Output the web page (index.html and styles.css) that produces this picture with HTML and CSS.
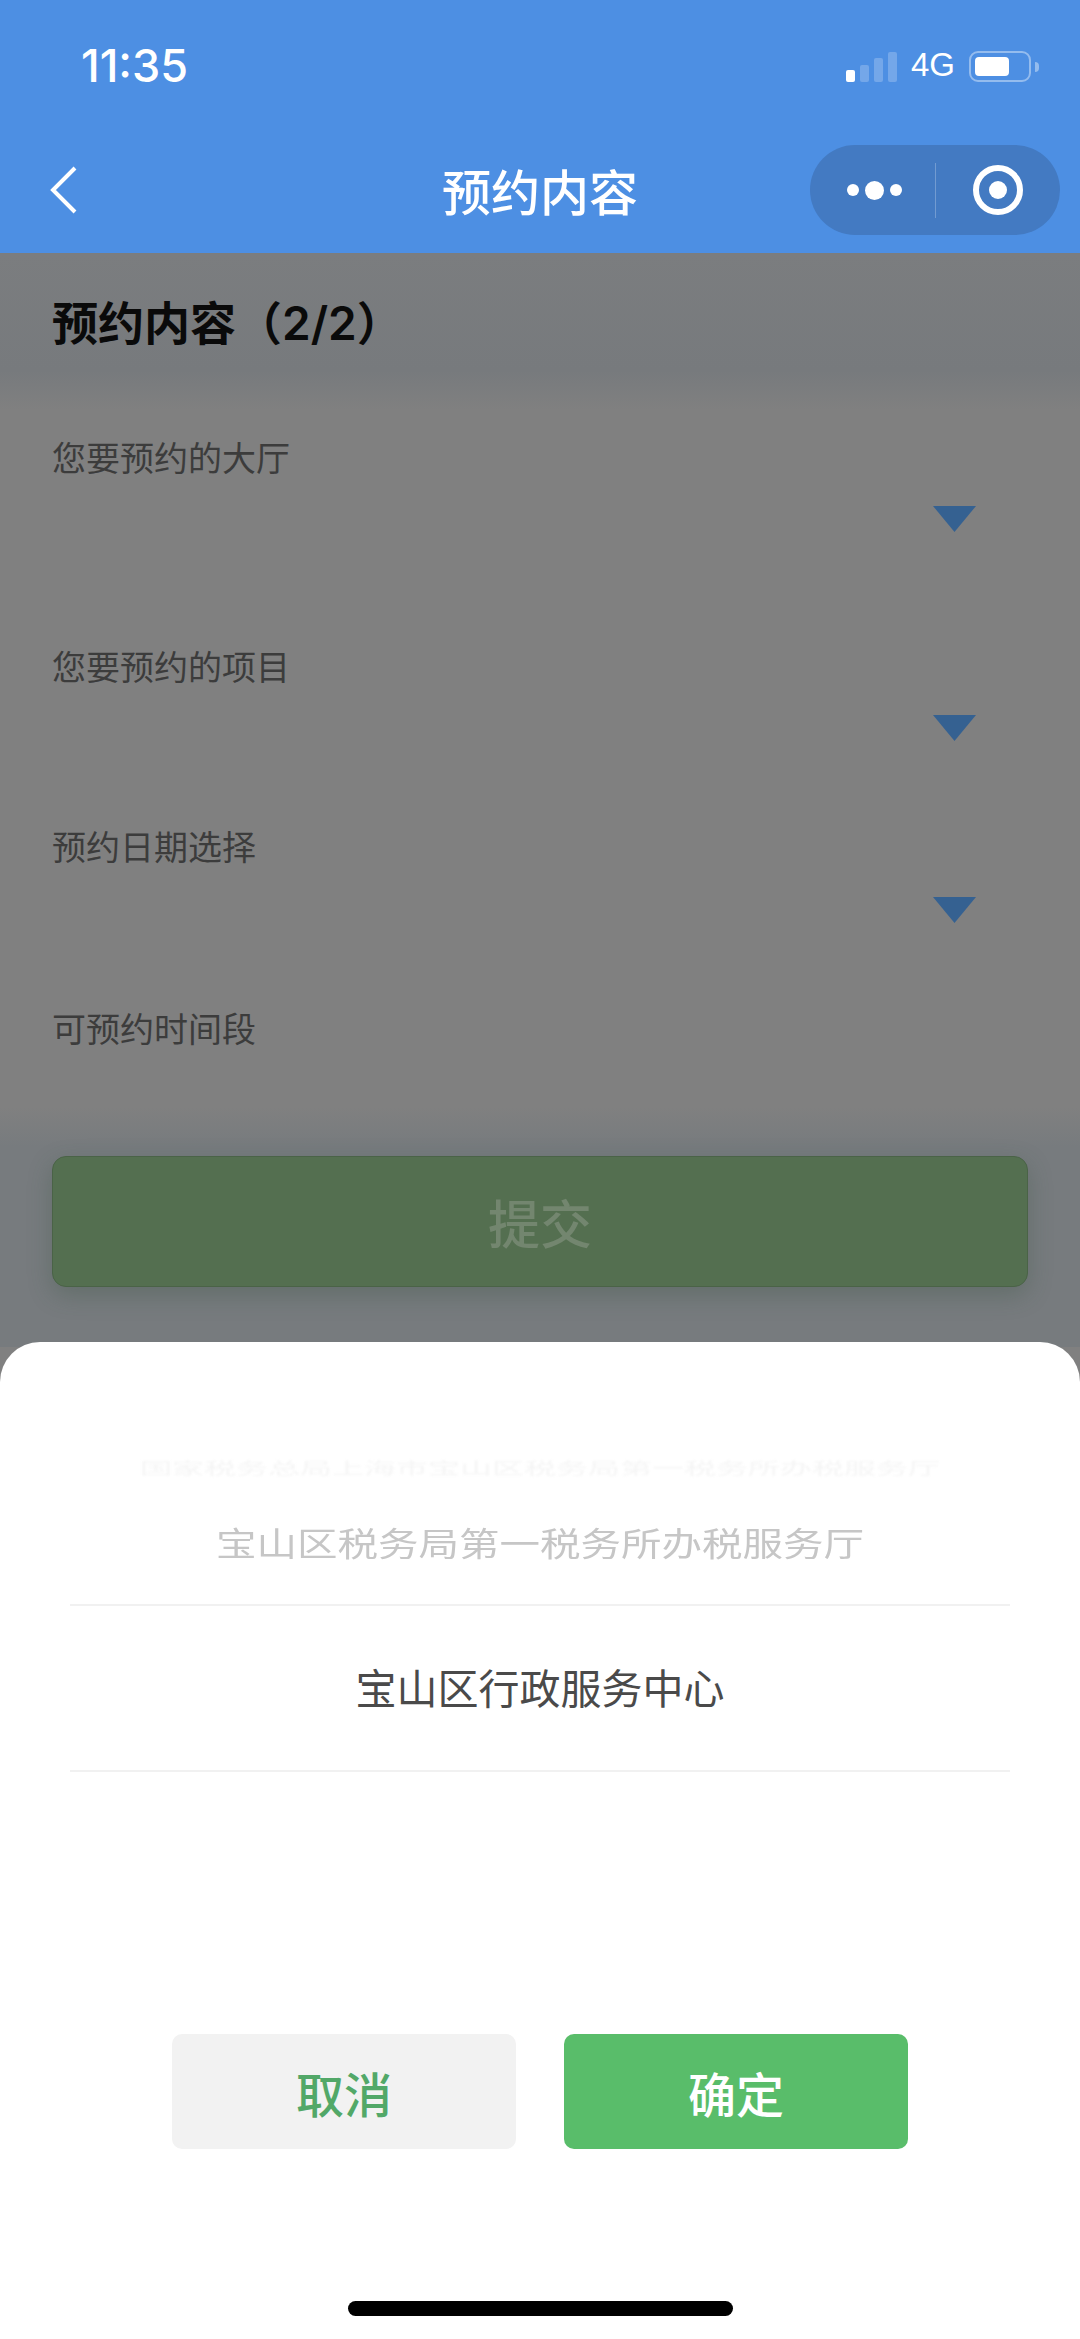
FILE: index.html
```html
<!DOCTYPE html>
<html lang="zh-CN">
<head>
  <meta charset="UTF-8" />
  <meta name="viewport" content="width=device-width, initial-scale=1.0"/>
  <title>预约内容</title>
  <link rel="stylesheet" href="styles.css">
</head>
<body>

<div class="screen">
  <header class="topbar">
    <div class="statusbar">
      <span class="time">11:35</span>
      <div class="status-icons">
        <div class="signal">
          <i class="bar bar1"></i>
          <i class="bar bar2"></i>
          <i class="bar bar3"></i>
          <i class="bar bar4"></i>
        </div>
        <span class="network">4G</span>
        <div class="battery"><i class="battery-level"></i></div>
        <i class="battery-nub"></i>
      </div>
    </div>
    <div class="navbar">
      <svg class="back" width="28" height="48" viewBox="0 0 28 48">
        <path d="M25 2 L3 24 L25 46" fill="none" stroke="#fff" stroke-width="4"/>
      </svg>
      <h1 class="nav-title">预约内容</h1>
      <div class="capsule">
        <div class="capsule-more">
          <i class="dot"></i>
          <i class="dot dot-big"></i>
          <i class="dot"></i>
        </div>
        <i class="capsule-line"></i>
        <div class="capsule-close"><i class="capsule-close-inner"></i></div>
      </div>
    </div>
  </header>

  <main class="content">
    <h2 class="form-title">预约内容（2/2）</h2>
    <div class="field field-hall">
      <label class="field-label">您要预约的大厅</label>
      <i class="arrow"></i>
    </div>
    <div class="field field-item">
      <label class="field-label">您要预约的项目</label>
      <i class="arrow"></i>
    </div>
    <div class="field field-date">
      <label class="field-label">预约日期选择</label>
      <i class="arrow"></i>
    </div>
    <div class="field field-time">
      <label class="field-label">可预约时间段</label>
    </div>
    <div class="submit-wrap">
      <button class="submit" type="button">提交</button>
    </div>
  </main>

  <section class="sheet">
    <div class="picker">
      <div class="picker-ghost"><span>国家税务总局上海市宝山区税务局第一税务所办税服务厅</span></div>
      <div class="picker-option"><span>宝山区税务局第一税务所办税服务厅</span></div>
      <div class="picker-selected">宝山区行政服务中心</div>
    </div>
    <div class="sheet-actions">
      <button class="btn btn-cancel" type="button">取消</button>
      <button class="btn btn-ok" type="button">确定</button>
    </div>
    <div class="home-bar"></div>
  </section>
</div>

</body>
</html>
```

FILE: styles.css
```css
* {
  box-sizing: border-box;
}

body {
  margin: 0;
  font-family: "Noto Sans CJK SC", "Liberation Sans", sans-serif;
}

.screen {
  position: relative;
  width: 1080px;
  height: 2339px;
  overflow: hidden;
  background: #808080;
}

/* top blue area */
.topbar {
  height: 253px;
  background: #4d8fe3;
  color: #fff;
}

.statusbar {
  height: 133px;
  padding: 41px 41px 0 81px;
  display: flex;
  justify-content: space-between;
  align-items: flex-start;
}

.time {
  font-family: Inter, "Liberation Sans", sans-serif;
  font-size: 45px;
  font-weight: 500;
  line-height: 50px;
}

.status-icons {
  display: flex;
  align-items: flex-end;
  height: 41px;
}

.signal {
  display: flex;
  align-items: flex-end;
  gap: 5px;
  height: 30px;
  margin-right: 14px;
}

.bar {
  display: block;
  width: 9px;
  border-radius: 2px;
  background: rgba(255, 255, 255, 0.22);
}

.bar1 {
  height: 12px;
  background: #fff;
}

.bar2 {
  height: 17px;
}

.bar3 {
  height: 24px;
}

.bar4 {
  height: 30px;
}

.network {
  font-family: "Liberation Sans", sans-serif;
  font-size: 33px;
  line-height: 34px;
  margin-right: 14px;
}

.battery {
  width: 62px;
  height: 31px;
  padding: 4px;
  border: 2px solid rgba(255, 255, 255, 0.4);
  border-radius: 9px;
}

.battery-level {
  display: block;
  width: 34px;
  height: 19px;
  background: #fff;
  border-radius: 4px;
}

.battery-nub {
  display: block;
  width: 4px;
  height: 10px;
  margin: 0 0 10px 4px;
  background: rgba(255, 255, 255, 0.4);
  border-radius: 0 4px 4px 0;
}

.navbar {
  height: 120px;
  padding: 12px 20px 18px 50px;
  display: flex;
  align-items: center;
  justify-content: space-between;
  position: relative;
}

.back {
  display: block;
}

.nav-title {
  position: absolute;
  left: 0;
  right: 0;
  margin: 0;
  text-align: center;
  font-size: 49px;
  font-weight: 500;
  line-height: 60px;
}

.capsule {
  width: 250px;
  height: 90px;
  border-radius: 45px;
  background: #437ac2;
  display: flex;
  align-items: center;
}

.capsule-more {
  width: 125px;
  padding-left: 3px;
  display: flex;
  justify-content: center;
  align-items: center;
  gap: 6px;
}

.dot {
  display: block;
  width: 12px;
  height: 12px;
  border-radius: 50%;
  background: #fff;
}

.dot-big {
  width: 19px;
  height: 19px;
}

.capsule-line {
  display: block;
  width: 1px;
  height: 55px;
  background: rgba(255, 255, 255, 0.25);
}

.capsule-close {
  width: 50px;
  height: 50px;
  margin-left: 37px;
  border: 6px solid #fff;
  border-radius: 50%;
  display: flex;
  align-items: center;
  justify-content: center;
}

.capsule-close-inner {
  display: block;
  width: 18px;
  height: 18px;
  border-radius: 50%;
  background: #fff;
}

/* dimmed form behind the sheet */
.form-title {
  margin: 0;
  height: 157px;
  padding: 38px 52px 0;
  background: linear-gradient(#7b7d7f, #777a7d 75%, #808080);
  color: #0a0a0a;
  font-family: Inter, "Noto Sans CJK SC", sans-serif;
  font-size: 46px;
  font-weight: 600;
  line-height: 64px;
}

.field {
  position: relative;
  padding-left: 52px;
}

.field-hall {
  height: 189px;
  padding-top: 22px;
}

.field-item {
  height: 182px;
  padding-top: 42px;
}

.field-date {
  height: 183px;
  padding-top: 40px;
}

.field-time {
  height: 143px;
  padding-top: 39px;
}

.field-hall .arrow {
  top: 96px;
}

.field-label {
  display: block;
  color: #3c3c3c;
  font-size: 34px;
  font-weight: 400;
  line-height: 50px;
}

.arrow {
  position: absolute;
  left: 933px;
  top: 116px;
  width: 43px;
  height: 26px;
  background: #356191;
  clip-path: polygon(0 0, 100% 0, 50% 100%);
}

.submit-wrap {
  height: 240px;
  padding: 49px 52px 0;
  background: linear-gradient(#808080, #777b7e 40px);
}

.submit {
  display: block;
  width: 976px;
  height: 131px;
  border: 1px solid #4a6347;
  border-radius: 14px;
  background: #546f50;
  box-shadow: 0 8px 24px rgba(50, 80, 60, 0.3);
  color: #73866f;
  font-family: inherit;
  font-size: 52px;
  font-weight: 500;
}

/* bottom sheet */
.sheet {
  position: absolute;
  left: 0;
  right: 0;
  top: 1342px;
  bottom: 0;
  background: #fff;
  border-radius: 40px 40px 0 0;
}

.picker {
  height: 431px;
  padding: 111px 70px 0;
}

.picker-ghost {
  height: 28px;
  overflow: hidden;
  text-align: center;
  color: #f5f5f5;
  font-size: 32px;
  line-height: 28px;
  white-space: nowrap;
  filter: blur(1px);
}

.picker-ghost span {
  display: block;
  transform: scaleY(0.5);
}

.picker-option {
  height: 125px;
  padding-top: 36px;
  border-bottom: 2px solid #f1f1f1;
  text-align: center;
  color: #c6c6c6;
  font-size: 40.5px;
  font-weight: 400;
  line-height: 50px;
  white-space: nowrap;
}

.picker-option span {
  display: block;
  transform: scaleY(0.8);
}

.picker-selected {
  height: 166px;
  padding-top: 50px;
  border-bottom: 2px solid #f1f1f1;
  text-align: center;
  color: #4a4a4a;
  font-size: 41px;
  font-weight: 400;
  line-height: 60px;
}

.sheet-actions {
  display: flex;
  justify-content: center;
  gap: 48px;
  padding-top: 261px;
}

.btn {
  width: 344px;
  height: 115px;
  border: none;
  border-radius: 10px;
  font-family: inherit;
  font-size: 48px;
  font-weight: 500;
}

.btn-cancel {
  background: #f2f2f2;
  color: #52a868;
}

.btn-ok {
  background: #59bd6a;
  color: #fff;
}

.home-bar {
  width: 385px;
  height: 15px;
  margin: 152px auto 0;
  background: #000;
  border-radius: 8px;
}
```
